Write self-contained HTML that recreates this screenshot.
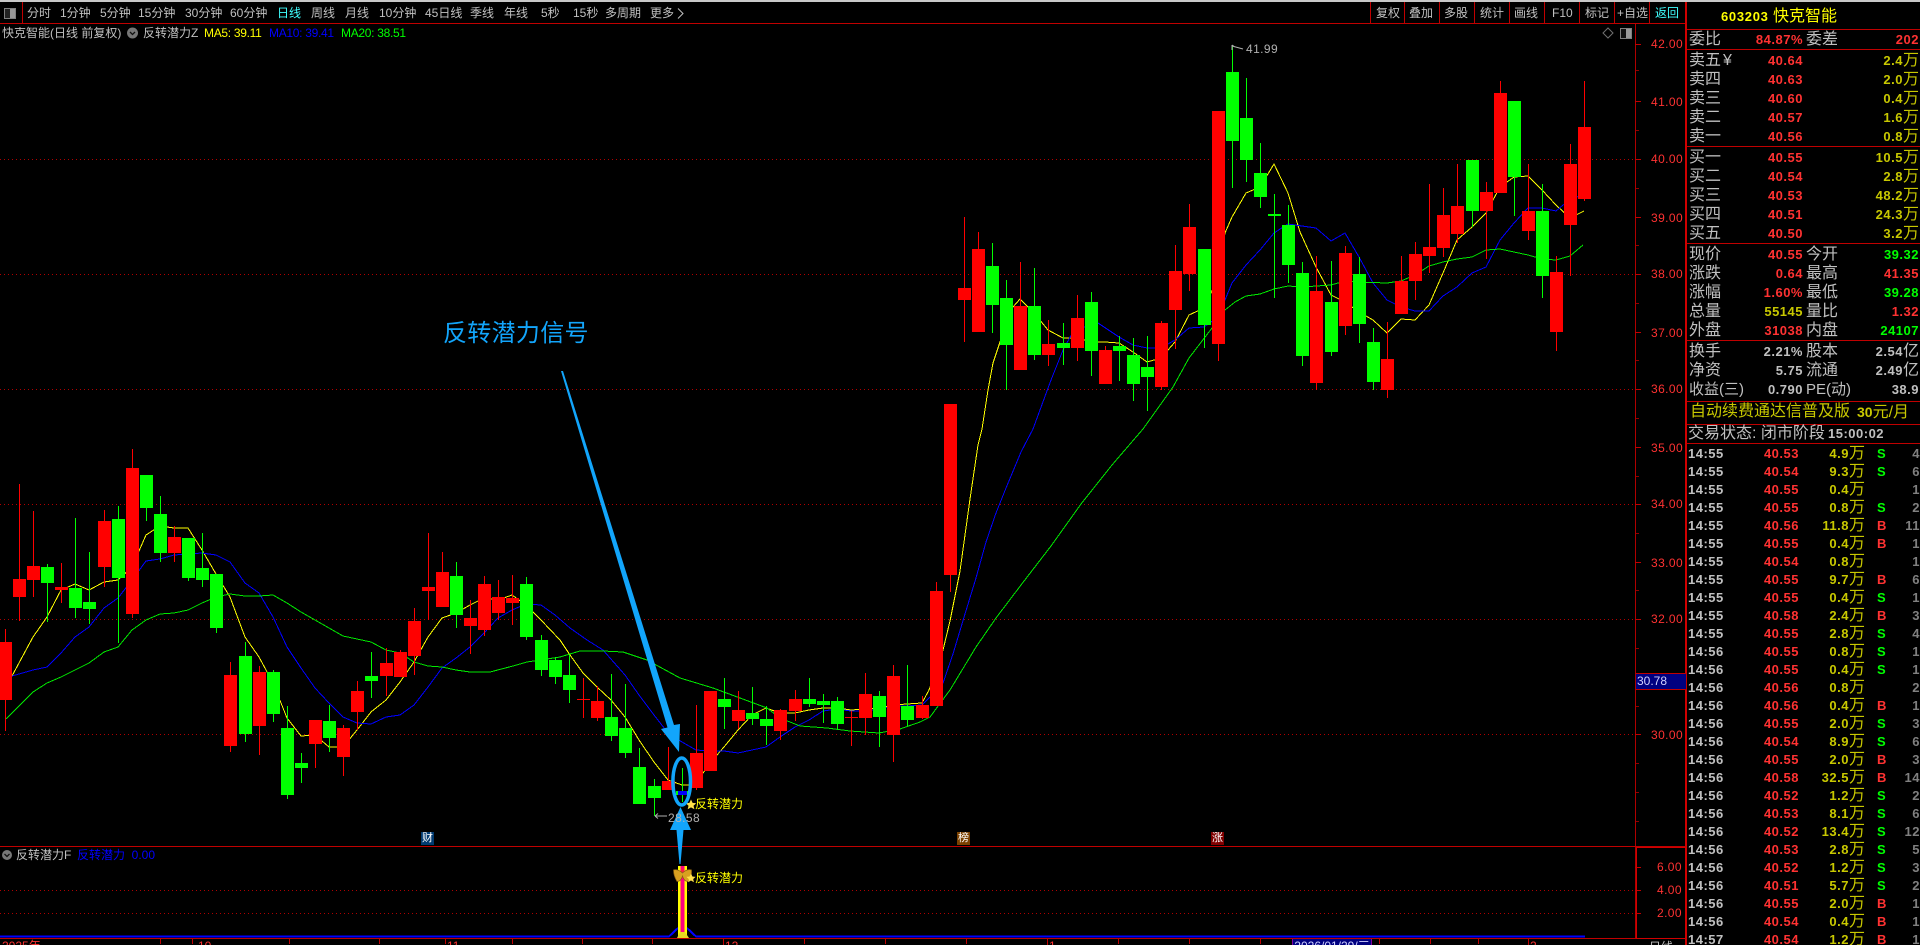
<!DOCTYPE html>
<html lang="zh">
<head>
<meta charset="utf-8">
<title>快克智能</title>
<style>
html,body{margin:0;padding:0;background:#000;width:1920px;height:945px;overflow:hidden}
body{position:relative;font-family:"Liberation Sans","WenQuanYi Zen Hei","Noto Sans CJK SC",sans-serif;color:#c0c0c0}
.t{position:absolute;white-space:nowrap;line-height:18px;height:18px}
.tb{font-size:12px;top:4px;color:#c0c0c0}
.l{font-size:16px;left:1689px;color:#c0c0c0;margin-top:1px}
.m{font-size:16px;left:1806px;color:#c0c0c0;margin-top:1px}
.n{font-weight:bold;font-size:13px;letter-spacing:.5px;right:117px;color:#ff3232;margin-top:1px}
.v{font-weight:bold;font-size:13px;letter-spacing:.5px;right:1px;color:#ff3232;margin-top:1px}
.w{font-size:16px;font-weight:normal;letter-spacing:0}
.g{color:#00ff00}.y{color:#c8c800}.s{color:#c0c0c0}
.ax{font-size:12px;left:1651px;color:#ff3232;letter-spacing:.4px}
.ma{font-size:12px;top:24px;letter-spacing:-.3px}
.r{position:absolute;left:1688px;width:232px;height:18px;line-height:18px;overflow:hidden;font-weight:bold;font-size:13px;letter-spacing:.5px;margin-top:1px}
.r span{position:absolute;top:0;white-space:nowrap}
.r .a{left:0;color:#c0c0c0}
.r .b{right:121px;color:#ff3232}
.r .c{right:55px;color:#c8c800}
.r .c i{font-style:normal;font-weight:normal;font-size:16px;letter-spacing:0}
.r .d{left:189px;font-size:13px}
.r .e{right:0;color:#808080}
.d1{color:#00ff00}.d2{color:#ff3232}
.mk{position:absolute;width:13px;height:13px;font-size:11px;line-height:13px;text-align:center;color:#fff;overflow:hidden}
.bt{position:absolute;top:939px;height:14px;line-height:14px;font-size:12px;color:#ff3232;white-space:nowrap}
</style>
</head>
<body>
<div style="position:absolute;left:0;top:0;width:1920px;height:2px;background:#c8c8c8"></div>

<svg width="1920" height="945" viewBox="0 0 1920 945" style="position:absolute;left:0;top:0" shape-rendering="crispEdges">
<!-- frame lines -->
<path d="M0 23.5H1686" stroke="#c00000" fill="none"/>
<path d="M22.5 2V23M1370.5 2V23M1404.5 2V23M1439.5 2V23M1474.5 2V23M1509.5 2V23M1544.5 2V23M1579.5 2V23M1614.5 2V23M1649.5 2V23" stroke="#c00000" fill="none"/>
<path d="M1635.5 24V938" stroke="#b00000" fill="none"/>
<path d="M1686 2V945" stroke="#d00000" stroke-width="2" fill="none"/>
<path d="M1687 29.5H1920M1687 49.5H1920M1687 146.5H1920M1687 243.5H1920M1687 340.5H1920M1687 401.5H1920M1687 424.5H1920M1687 443.5H1920" stroke="#c00000" fill="none"/>
<!-- grid -->
<path d="M0 159.5H1635M0 274.5H1635M0 389.5H1635M0 504.5H1635M0 619.5H1635M0 734.5H1635M0 890.5H1635M0 913.5H1635" stroke="#b00000" stroke-dasharray="1 3" fill="none"/>
<path d="M1635 44.5h6M1635 101.5h6M1635 159.5h6M1635 217.5h6M1635 274.5h6M1635 332.5h6M1635 389.5h6M1635 447.5h6M1635 504.5h6M1635 562.5h6M1635 619.5h6M1635 734.5h6M1635 867.5h6M1635 890.5h6M1635 913.5h6" stroke="#c00000" fill="none"/>
<path d="M1636 70.5h3M1636 130.5h3M1636 188.5h3M1636 245.5h3M1636 303.5h3M1636 360.5h3M1636 418.5h3M1636 476.5h3M1636 533.5h3M1636 590.5h3M1636 648.5h3M1636 706.5h3M1636 763.5h3M1636 792.5h3M1636 821.5h3" stroke="#900000" fill="none"/>
<path d="M0 846.5H1686" stroke="#c00000" fill="none"/>
<path d="M1636.5 847.5H1685.5V938.5H1636.5Z" stroke="#d00000" fill="none"/>
<path d="M0 938.5H1636" stroke="#c00000" fill="none"/>
<path d="M0 936.5H669L678 928M687 928L696 936.5H1585" stroke="#0000ff" stroke-width="2" fill="none"/>
<path d="M160.5 939v5M192.5 939v5M289.5 939v5M379.5 939v5M445.5 939v5M512.5 939v5M582.5 939v5M652.5 939v5M723.5 939v6M804.5 939v5M885.5 939v5M966.5 939v5M1047.5 939v6M1118.5 939v5M1189.5 939v5M1260.5 939v5M1379.5 939v5M1430.5 939v5M1478.5 939v5M1528.5 939v6" stroke="#c00000" fill="none"/>

<!-- MA5 -->
<path fill="none" stroke="#ffff00" d="M12 676L33 637L47 617L61 590L75 584L89 590L104 582L118 580L132 567L146 535L160 526L174 528L188 528L202 550L216 574L230 597L245 637L259 657L273 683L287 718L301 736L315 735L329 747L343 747L357 730L371 712L386 700L400 682L414 662L428 637L442 618L456 613L470 605L484 598L498 600L512 595L526 605L541 620L560 640L570 655L583 673L597 687L611 700L625 717L639 740L654 762L668 780L682 785L696 785L703 773L717 755L724 747L738 730L752 715L766 708L780 713L795 713L809 710L823 708L837 708L851 710L865 709L879 708L893 705L907 704L922 703L929 690L943 650L950 621L960 571L970 499L978 445L982 429L988 390L993 363L1000 342L1013 307L1020 299L1034 313L1048 330L1063 338L1077 338L1091 342L1105 342L1119 343L1133 352L1147 362L1161 358L1175 342L1189 315L1204 308L1218 278L1225 233L1232 217L1246 193L1260 187L1274 164L1288 193L1300 232L1316 267L1331 295L1345 302L1359 312L1373 320L1387 333L1401 319L1415 320L1429 305L1443 273L1457 240L1472 227L1486 213L1500 187L1514 177L1528 176L1542 190L1556 205L1570 218L1584 211"/>
<!-- MA10 -->
<path fill="none" stroke="#0000ff" d="M12 676L33 670L47 667L61 653L75 637L89 627L104 608L118 598L132 580L146 561L160 559L174 555L188 554L202 553L216 555L230 562L245 583L259 593L273 617L287 647L301 668L315 688L329 703L343 717L357 723L371 724L386 717L400 715L414 705L428 687L442 668L456 658L470 647L484 633L498 618L512 610L526 604L541 605L555 615L570 628L587 640L603 650L625 675L639 695L654 715L668 733L682 742L696 750L710 751L724 751L738 753L752 750L766 747L780 737L795 727L809 720L823 711L837 709L851 711L865 711L879 709L893 706L907 706L922 705L930 697L943 683L953 654L965 614L976 578L986 542L996 513L1006 488L1021 452L1033 429L1051 380L1063 350L1074 330L1098 323L1119 337L1133 345L1147 348L1161 348L1175 340L1189 328L1204 327L1218 317L1232 283L1246 265L1260 250L1274 233L1288 224L1302 226L1316 228L1331 241L1345 233L1359 257L1373 283L1387 300L1401 307L1415 311L1429 311L1443 296L1457 287L1472 273L1486 267L1500 240L1514 223L1528 208L1542 208L1556 211L1563 205L1584 193"/>
<!-- MA20 -->
<path fill="none" stroke="#00e800" d="M6 719L33 692L47 683L61 677L75 670L89 663L104 652L118 647L132 630L146 620L160 614L174 613L188 610L202 603L216 597L230 594L245 596L259 596L273 595L287 603L301 612L315 620L329 628L343 636L357 639L371 642L386 650L400 653L414 662L428 666L442 667L456 670L470 672L490 672L513 666L527 662L560 657L580 651L603 651L623 652L647 660L680 678L713 688L740 698L767 708L780 718L800 726L827 728L850 731L879 733L900 729L920 722L930 717L950 690L976 647L996 618L1021 585L1051 546L1081 504L1112 465L1143 429L1173 387L1189 358L1212 328L1225 310L1235 302L1246 296L1260 294L1274 289L1288 286L1302 287L1331 285L1345 281L1359 282L1387 283L1401 281L1415 275L1429 266L1443 262L1457 259L1472 257L1486 250L1500 249L1514 252L1528 255L1542 259L1556 260L1570 256L1583 245"/>

<!-- red wicks -->
<path fill="none" stroke="#ff0000" d="M5.5 629V731M19.5 484V621M33.5 511V597M61.5 563V603M104.5 510V587M132.5 449V618M174.5 526V562M230.5 662V752M259.5 666V755M315.5 720V768M343.5 725V776M357.5 681V730M386.5 648V696M400.5 650V677M414.5 608V675M428.5 533V620M442.5 552V607M470.5 600V654M484.5 576V636M498.5 580V620M512.5 575V625M583.5 678V718M597.5 686V721M668.5 747V790M696.5 705V790M710.5 691V771M738.5 691V729M780.5 709V740M795.5 690V721M851.5 711V746M865.5 673V735M893.5 665V762M922.5 696V719M936.5 582V706M950.5 404V592M964.5 217V342M978.5 232V332M1020.5 262V370M1048.5 320V366M1077.5 295V361M1105.5 346V384M1161.5 321V390M1175.5 245V349M1189.5 204V291M1218.5 111V361M1316.5 256V390M1345.5 246V335M1387.5 322V398M1401.5 256V314M1415.5 242V300M1429.5 184V273M1443.5 188V257M1457.5 164V243M1486.5 182V259M1500.5 81V193M1528.5 164V240M1556.5 256V351M1570.5 144V276M1584.5 81V201"/>
<!-- green wicks -->
<path fill="none" stroke="#00ff00" d="M47.5 564V622M75.5 518V618M89.5 552V624M118.5 506V643M146.5 475V521M160.5 496V562M188.5 538V581M202.5 533V587M216.5 574V633M245.5 642V742M273.5 670V722M287.5 706V799M301.5 753V783M329.5 705V752M371.5 652V698M456.5 562V628M526.5 577V640M541.5 635V676M555.5 657V684M569.5 655V703M611.5 674V741M625.5 684V758M639.5 748V804M654.5 779V816M682.5 768V802M724.5 678V729M752.5 687V725M766.5 706V745M809.5 678V707M823.5 694V723M837.5 697V729M879.5 691V747M907.5 665V726M992.5 243V333M1006.5 280V390M1034.5 268V360M1063.5 323V365M1091.5 292V376M1119.5 336V381M1133.5 338V401M1147.5 336V411M1204.5 249V348M1232.5 45V188M1246.5 78V182M1260.5 143V208M1274.5 194V298M1288.5 205V283M1302.5 262V366M1331.5 261V356M1359.5 257V343M1373.5 328V390M1472.5 160V227M1514.5 101V216M1542.5 184V298"/>
<!-- red bodies -->
<path fill="#ff0000" d="M-1 642h13v58h-13zM13 579h13v18h-13zM27 566h13v14h-13zM55 587h13v3h-13zM98 521h13v46h-13zM126 468h13v146h-13zM168 537h13v16h-13zM224 675h13v71h-13zM253 672h13v54h-13zM309 720h13v24h-13zM337 728h13v29h-13zM351 691h13v21h-13zM380 663h13v13h-13zM394 652h13v25h-13zM408 621h13v35h-13zM422 587h13v4h-13zM436 572h13v35h-13zM464 618h13v8h-13zM478 584h13v46h-13zM492 597h13v16h-13zM506 598h13v5h-13zM577 699h13v1h-13zM591 701h13v17h-13zM662 781h13v9h-13zM690 753h13v35h-13zM704 691h13v80h-13zM732 710h13v11h-13zM774 710h13v21h-13zM789 699h13v12h-13zM845 717h13v1h-13zM859 694h13v24h-13zM887 676h13v59h-13zM916 705h13v13h-13zM930 591h13v115h-13zM944 404h13v171h-13zM958 288h13v12h-13zM972 249h13v83h-13zM1014 306h13v64h-13zM1042 344h13v11h-13zM1071 318h13v30h-13zM1099 350h13v34h-13zM1155 323h13v64h-13zM1169 271h13v39h-13zM1183 227h13v47h-13zM1212 111h13v233h-13zM1310 291h13v92h-13zM1339 253h13v73h-13zM1381 359h13v31h-13zM1395 281h13v33h-13zM1409 254h13v27h-13zM1423 247h13v9h-13zM1437 215h13v33h-13zM1451 206h13v28h-13zM1480 192h13v19h-13zM1494 93h13v100h-13zM1522 211h13v20h-13zM1550 272h13v60h-13zM1564 164h13v61h-13zM1578 127h13v72h-13z"/>
<!-- green bodies -->
<path fill="#00ff00" d="M41 567h13v16h-13zM69 588h13v20h-13zM83 602h13v7h-13zM112 519h13v59h-13zM140 475h13v33h-13zM154 514h13v39h-13zM182 538h13v40h-13zM196 568h13v12h-13zM210 574h13v54h-13zM239 656h13v78h-13zM267 672h13v42h-13zM281 728h13v67h-13zM295 763h13v5h-13zM323 721h13v17h-13zM365 676h13v5h-13zM450 576h13v39h-13zM520 584h13v53h-13zM535 640h13v30h-13zM549 660h13v17h-13zM563 675h13v15h-13zM605 717h13v19h-13zM619 728h13v25h-13zM633 767h13v37h-13zM648 786h13v12h-13zM676 791h13v4h-13zM718 699h13v8h-13zM746 713h13v6h-13zM760 719h13v7h-13zM803 699h13v5h-13zM817 701h13v4h-13zM831 701h13v23h-13zM873 696h13v21h-13zM901 706h13v14h-13zM986 266h13v39h-13zM1000 298h13v47h-13zM1028 306h13v49h-13zM1057 343h13v5h-13zM1085 302h13v49h-13zM1113 346h13v5h-13zM1127 355h13v29h-13zM1141 367h13v10h-13zM1198 249h13v76h-13zM1226 72h13v69h-13zM1240 118h13v42h-13zM1254 173h13v24h-13zM1268 214h13v2h-13zM1282 225h13v40h-13zM1296 273h13v83h-13zM1325 302h13v50h-13zM1353 274h13v50h-13zM1367 342h13v40h-13zM1466 160h13v51h-13zM1508 101h13v76h-13zM1536 211h13v65h-13z"/>
<path fill="#0000ff" d="M678 791h9v4h-9z"/>
<!-- icons toolbar -->
<path d="M4.500 8.500h11v10h-11z" fill="#222" stroke="#808080"/><path d="M10 9h5v9h-5z" fill="#999"/>
<path d="M1620.500 28.500h11v10h-11z" fill="#111" stroke="#808080"/><path d="M1626 29h5v9h-5z" fill="#999"/>
</svg>

<svg width="1920" height="945" viewBox="0 0 1920 945" style="position:absolute;left:0;top:0">
<circle cx="132.500" cy="33" r="5.500" fill="#777"/><path d="M130 32l2.500 2.500 2.500-2.500" stroke="#111" stroke-width="1.300" fill="none"/>
<circle cx="7" cy="855" r="5" fill="#777"/><path d="M4.500 854l2.500 2.500 2.500-2.500" stroke="#111" stroke-width="1.300" fill="none"/>
<path d="M1608 28l5 5-5 5-5-5z" fill="none" stroke="#707070"/>
<path d="M678 8.500l5 5-5 5" fill="none" stroke="#c0c0c0"/>
<!-- high / low arrows -->
<path d="M1232 46l11 3M1232 45v5M1232 45l3 2" stroke="#b0b0b0" fill="none"/>
<path d="M655 816h12M655 816l3-2.500M655 816l3 2.500" stroke="#b0b0b0" fill="none"/>
<!-- sub bar -->
<path d="M678 866h9v72h-9z" fill="#ffff00"/><path d="M680.500 866h4v72h-4z" fill="#ff0080"/>
<path d="M677 938l3-6h5l4 6z" fill="#e8d820"/>
<path d="M682.500 868l-2 4h4z" fill="#ff2040"/>
<path d="M682.500 873c-3-3-7-4-9-3 0 5 2 9 3.500 11.500 2.500 0 4.500-2 5.500-5.500 1 3.500 3 5.500 5.500 5.500 2-2.500 4-6.500 3.500-11.500-3-1-6 0-9 3z" fill="#d8a020" stroke="#8a6010" stroke-width=".7"/>
<path d="M691 799.500l1.600 3.400 3.700.4-2.800 2.400.9 3.600-3.400-1.900-3.300 1.900.8-3.600-2.700-2.400 3.600-.4z" fill="#ffe14a"/>
<path d="M691 873.500l1.400 3 3.200.4-2.400 2.200.7 3.100-2.900-1.700-2.900 1.700.7-3.100-2.400-2.200 3.200-.4z" fill="#ffe14a"/>
<!-- annotation arrows -->
<polygon points="561,371 563,371 674,725 680,724 679,752 661,729 667.500,727.500" fill="#12a5fb"/>
<ellipse cx="681.700" cy="781.500" rx="8.800" ry="23.500" fill="none" stroke="#12a5fb" stroke-width="3.500"/>
<polygon points="679.500,864 680.500,864 683.500,830 691,830 680.500,807 670,830 676.500,830" fill="#12a5fb"/>
</svg>

<!-- toolbar -->
<span class="t tb" style="left:27px">分时</span>
<span class="t tb" style="left:60px">1分钟</span>
<span class="t tb" style="left:100px">5分钟</span>
<span class="t tb" style="left:138px">15分钟</span>
<span class="t tb" style="left:185px">30分钟</span>
<span class="t tb" style="left:230px">60分钟</span>
<span class="t tb" style="left:277px;color:#40ffff">日线</span>
<span class="t tb" style="left:311px">周线</span>
<span class="t tb" style="left:345px">月线</span>
<span class="t tb" style="left:379px">10分钟</span>
<span class="t tb" style="left:425px">45日线</span>
<span class="t tb" style="left:470px">季线</span>
<span class="t tb" style="left:504px">年线</span>
<span class="t tb" style="left:541px">5秒</span>
<span class="t tb" style="left:573px">15秒</span>
<span class="t tb" style="left:605px">多周期</span>
<span class="t tb" style="left:650px">更多</span>
<span class="t tb" style="left:1376px">复权</span>
<span class="t tb" style="left:1409px">叠加</span>
<span class="t tb" style="left:1444px">多股</span>
<span class="t tb" style="left:1480px">统计</span>
<span class="t tb" style="left:1514px">画线</span>
<span class="t tb" style="left:1552px">F10</span>
<span class="t tb" style="left:1585px">标记</span>
<span class="t tb" style="left:1617px">+自选</span>
<span class="t tb" style="left:1655px;color:#40ffff">返回</span>

<!-- chart title -->
<span class="t" style="left:2px;top:24px;font-size:12px">快克智能(日线 前复权)</span>
<span class="t" style="left:143px;top:24px;font-size:12px">反转潜力Z</span>
<span class="t ma" style="left:204px;color:#ffff00">MA5: 39.11</span>
<span class="t ma" style="left:269px;color:#0000ff">MA10: 39.41</span>
<span class="t ma" style="left:341px;color:#00ff00">MA20: 38.51</span>

<!-- axis -->
<span class="t ax" style="top:35px">42.00</span>
<span class="t ax" style="top:93px">41.00</span>
<span class="t ax" style="top:150px">40.00</span>
<span class="t ax" style="top:209px">39.00</span>
<span class="t ax" style="top:265px">38.00</span>
<span class="t ax" style="top:324px">37.00</span>
<span class="t ax" style="top:380px">36.00</span>
<span class="t ax" style="top:439px">35.00</span>
<span class="t ax" style="top:495px">34.00</span>
<span class="t ax" style="top:554px">33.00</span>
<span class="t ax" style="top:610px">32.00</span>
<span class="t ax" style="top:726px">30.00</span>
<span class="t ax" style="top:858px;left:1657px">6.00</span>
<span class="t ax" style="top:881px;left:1657px">4.00</span>
<span class="t ax" style="top:904px;left:1657px">2.00</span>
<div style="position:absolute;left:1636px;top:673px;width:49px;height:15px;background:#000080;border:1px solid #c00000;border-left:0;font-size:12px;line-height:15px;color:#d0d0ff;padding-left:1px;box-sizing:content-box">30.78</div>

<!-- annotations -->
<span class="t" style="left:443px;top:319px;font-size:24px;line-height:30px;height:30px;color:#12a5fb;letter-spacing:.3px;font-family:'Liberation Sans','Noto Sans CJK SC',sans-serif">反转潜力信号</span>
<span class="t" style="left:1246px;top:40px;font-size:12px;color:#b0b0b0;letter-spacing:.4px">41.99</span>
<span class="t" style="left:668px;top:809px;font-size:12px;color:#b0b0b0;letter-spacing:.4px">28.58</span>
<span class="t" style="left:695px;top:795px;font-size:12px;color:#ffff00">反转潜力</span>
<span class="t" style="left:695px;top:869px;font-size:12px;color:#ffff00">反转潜力</span>

<!-- markers -->
<div class="mk" style="left:421px;top:832px;background:#003a70">财</div>
<div class="mk" style="left:957px;top:832px;background:#7a4000">榜</div>
<div class="mk" style="left:1211px;top:832px;background:#800000">涨</div>

<!-- sub panel title -->
<span class="t" style="left:16px;top:846px;font-size:12px">反转潜力F</span>
<span class="t" style="left:77px;top:846px;font-size:12px;color:#0000ff">反转潜力&nbsp; 0.00</span>

<!-- bottom axis -->
<div style="position:absolute;left:0;top:939px;width:1686px;height:6px;overflow:hidden">
<span class="bt" style="left:2px;top:0;color:#ff3232">2025年</span>
<span class="bt" style="left:198px;top:0">10</span>
<span class="bt" style="left:447px;top:0">11</span>
<span class="bt" style="left:725px;top:0">12</span>
<span class="bt" style="left:1049px;top:0">1</span>
<span class="bt" style="left:1530px;top:0">2</span>
<span class="bt" style="left:1293px;top:0;width:78px;background:#000080;color:#d0d0ff;text-align:center;outline:1px solid #8000a0">2026/01/29/三</span>
<span class="bt" style="left:1649px;top:1px;color:#c0c0c0">日线</span>
</div>

<!-- right panel -->
<span class="t" style="left:1721px;top:8px;font-weight:bold;font-size:13px;letter-spacing:.7px;color:#ffff00">603203</span>
<span class="t" style="left:1773px;top:8px;font-size:16px;color:#ffff00">快克智能</span>

<span class="t l" style="top:30px">委比</span><span class="t n" style="top:30px">84.87%</span><span class="t m" style="top:30px">委差</span><span class="t v" style="top:30px">202</span>

<span class="t l" style="top:51px">卖五</span><span class="t l" style="top:51px;left:1723px">¥</span><span class="t n" style="top:51px">40.64</span><span class="t v y" style="top:51px">2.4<span class="w">万</span></span>
<span class="t l" style="top:70px">卖四</span><span class="t n" style="top:70px">40.63</span><span class="t v y" style="top:70px">2.0<span class="w">万</span></span>
<span class="t l" style="top:89px">卖三</span><span class="t n" style="top:89px">40.60</span><span class="t v y" style="top:89px">0.4<span class="w">万</span></span>
<span class="t l" style="top:108px">卖二</span><span class="t n" style="top:108px">40.57</span><span class="t v y" style="top:108px">1.6<span class="w">万</span></span>
<span class="t l" style="top:127px">卖一</span><span class="t n" style="top:127px">40.56</span><span class="t v y" style="top:127px">0.8<span class="w">万</span></span>

<span class="t l" style="top:148px">买一</span><span class="t n" style="top:148px">40.55</span><span class="t v y" style="top:148px">10.5<span class="w">万</span></span>
<span class="t l" style="top:167px">买二</span><span class="t n" style="top:167px">40.54</span><span class="t v y" style="top:167px">2.8<span class="w">万</span></span>
<span class="t l" style="top:186px">买三</span><span class="t n" style="top:186px">40.53</span><span class="t v y" style="top:186px">48.2<span class="w">万</span></span>
<span class="t l" style="top:205px">买四</span><span class="t n" style="top:205px">40.51</span><span class="t v y" style="top:205px">24.3<span class="w">万</span></span>
<span class="t l" style="top:224px">买五</span><span class="t n" style="top:224px">40.50</span><span class="t v y" style="top:224px">3.2<span class="w">万</span></span>

<span class="t l" style="top:245px">现价</span><span class="t n" style="top:245px">40.55</span><span class="t m" style="top:245px">今开</span><span class="t v g" style="top:245px">39.32</span>
<span class="t l" style="top:264px">涨跌</span><span class="t n" style="top:264px">0.64</span><span class="t m" style="top:264px">最高</span><span class="t v" style="top:264px">41.35</span>
<span class="t l" style="top:283px">涨幅</span><span class="t n" style="top:283px">1.60%</span><span class="t m" style="top:283px">最低</span><span class="t v g" style="top:283px">39.28</span>
<span class="t l" style="top:302px">总量</span><span class="t n y" style="top:302px">55145</span><span class="t m" style="top:302px">量比</span><span class="t v" style="top:302px">1.32</span>
<span class="t l" style="top:321px">外盘</span><span class="t n" style="top:321px">31038</span><span class="t m" style="top:321px">内盘</span><span class="t v g" style="top:321px">24107</span>

<span class="t l" style="top:342px">换手</span><span class="t n s" style="top:342px">2.21%</span><span class="t m" style="top:342px">股本</span><span class="t v s" style="top:342px">2.54<span class="w">亿</span></span>
<span class="t l" style="top:361px">净资</span><span class="t n s" style="top:361px">5.75</span><span class="t m" style="top:361px">流通</span><span class="t v s" style="top:361px">2.49<span class="w">亿</span></span>
<span class="t l" style="top:380px;font-size:15px">收益(三)</span><span class="t n s" style="top:380px">0.790</span><span class="t m" style="top:380px;font-size:15px">PE(动)</span><span class="t v s" style="top:380px">38.9</span>

<span class="t" style="left:1690px;top:403px;font-size:16px;color:#c8c800">自动续费通达信普及版</span>
<span class="t" style="left:1857px;top:403px;font-size:16px;color:#c8c800"><b style="font-size:14px">30</b>元/月</span>
<span class="t" style="left:1688px;top:425px;font-size:16px">交易状态: 闭市阶段</span>
<span class="t" style="left:1828px;top:425px;font-size:13px;font-weight:bold;letter-spacing:.5px">15:00:02</span>

<!-- ticks -->
<div class="r" style="top:444px"><span class="a">14:55</span><span class="b">40.53</span><span class="c">4.9<i>万</i></span><span class="d d1">S</span><span class="e">4</span></div>
<div class="r" style="top:462px"><span class="a">14:55</span><span class="b">40.54</span><span class="c">9.3<i>万</i></span><span class="d d1">S</span><span class="e">6</span></div>
<div class="r" style="top:480px"><span class="a">14:55</span><span class="b">40.55</span><span class="c">0.4<i>万</i></span><span class="e">1</span></div>
<div class="r" style="top:498px"><span class="a">14:55</span><span class="b">40.55</span><span class="c">0.8<i>万</i></span><span class="d d1">S</span><span class="e">2</span></div>
<div class="r" style="top:516px"><span class="a">14:55</span><span class="b">40.56</span><span class="c">11.8<i>万</i></span><span class="d d2">B</span><span class="e">11</span></div>
<div class="r" style="top:534px"><span class="a">14:55</span><span class="b">40.55</span><span class="c">0.4<i>万</i></span><span class="d d2">B</span><span class="e">1</span></div>
<div class="r" style="top:552px"><span class="a">14:55</span><span class="b">40.54</span><span class="c">0.8<i>万</i></span><span class="e">1</span></div>
<div class="r" style="top:570px"><span class="a">14:55</span><span class="b">40.55</span><span class="c">9.7<i>万</i></span><span class="d d2">B</span><span class="e">6</span></div>
<div class="r" style="top:588px"><span class="a">14:55</span><span class="b">40.55</span><span class="c">0.4<i>万</i></span><span class="d d1">S</span><span class="e">1</span></div>
<div class="r" style="top:606px"><span class="a">14:55</span><span class="b">40.58</span><span class="c">2.4<i>万</i></span><span class="d d2">B</span><span class="e">3</span></div>
<div class="r" style="top:624px"><span class="a">14:55</span><span class="b">40.55</span><span class="c">2.8<i>万</i></span><span class="d d1">S</span><span class="e">4</span></div>
<div class="r" style="top:642px"><span class="a">14:56</span><span class="b">40.55</span><span class="c">0.8<i>万</i></span><span class="d d1">S</span><span class="e">1</span></div>
<div class="r" style="top:660px"><span class="a">14:56</span><span class="b">40.55</span><span class="c">0.4<i>万</i></span><span class="d d1">S</span><span class="e">1</span></div>
<div class="r" style="top:678px"><span class="a">14:56</span><span class="b">40.56</span><span class="c">0.8<i>万</i></span><span class="e">2</span></div>
<div class="r" style="top:696px"><span class="a">14:56</span><span class="b">40.56</span><span class="c">0.4<i>万</i></span><span class="d d2">B</span><span class="e">1</span></div>
<div class="r" style="top:714px"><span class="a">14:56</span><span class="b">40.55</span><span class="c">2.0<i>万</i></span><span class="d d1">S</span><span class="e">3</span></div>
<div class="r" style="top:732px"><span class="a">14:56</span><span class="b">40.54</span><span class="c">8.9<i>万</i></span><span class="d d1">S</span><span class="e">6</span></div>
<div class="r" style="top:750px"><span class="a">14:56</span><span class="b">40.55</span><span class="c">2.0<i>万</i></span><span class="d d2">B</span><span class="e">3</span></div>
<div class="r" style="top:768px"><span class="a">14:56</span><span class="b">40.58</span><span class="c">32.5<i>万</i></span><span class="d d2">B</span><span class="e">14</span></div>
<div class="r" style="top:786px"><span class="a">14:56</span><span class="b">40.52</span><span class="c">1.2<i>万</i></span><span class="d d1">S</span><span class="e">2</span></div>
<div class="r" style="top:804px"><span class="a">14:56</span><span class="b">40.53</span><span class="c">8.1<i>万</i></span><span class="d d1">S</span><span class="e">6</span></div>
<div class="r" style="top:822px"><span class="a">14:56</span><span class="b">40.52</span><span class="c">13.4<i>万</i></span><span class="d d1">S</span><span class="e">12</span></div>
<div class="r" style="top:840px"><span class="a">14:56</span><span class="b">40.53</span><span class="c">2.8<i>万</i></span><span class="d d1">S</span><span class="e">5</span></div>
<div class="r" style="top:858px"><span class="a">14:56</span><span class="b">40.52</span><span class="c">1.2<i>万</i></span><span class="d d1">S</span><span class="e">3</span></div>
<div class="r" style="top:876px"><span class="a">14:56</span><span class="b">40.51</span><span class="c">5.7<i>万</i></span><span class="d d1">S</span><span class="e">2</span></div>
<div class="r" style="top:894px"><span class="a">14:56</span><span class="b">40.55</span><span class="c">2.0<i>万</i></span><span class="d d2">B</span><span class="e">1</span></div>
<div class="r" style="top:912px"><span class="a">14:56</span><span class="b">40.54</span><span class="c">0.4<i>万</i></span><span class="d d2">B</span><span class="e">1</span></div>
<div class="r" style="top:930px"><span class="a">14:57</span><span class="b">40.54</span><span class="c">1.2<i>万</i></span><span class="d d2">B</span><span class="e">1</span></div>
</body>
</html>
